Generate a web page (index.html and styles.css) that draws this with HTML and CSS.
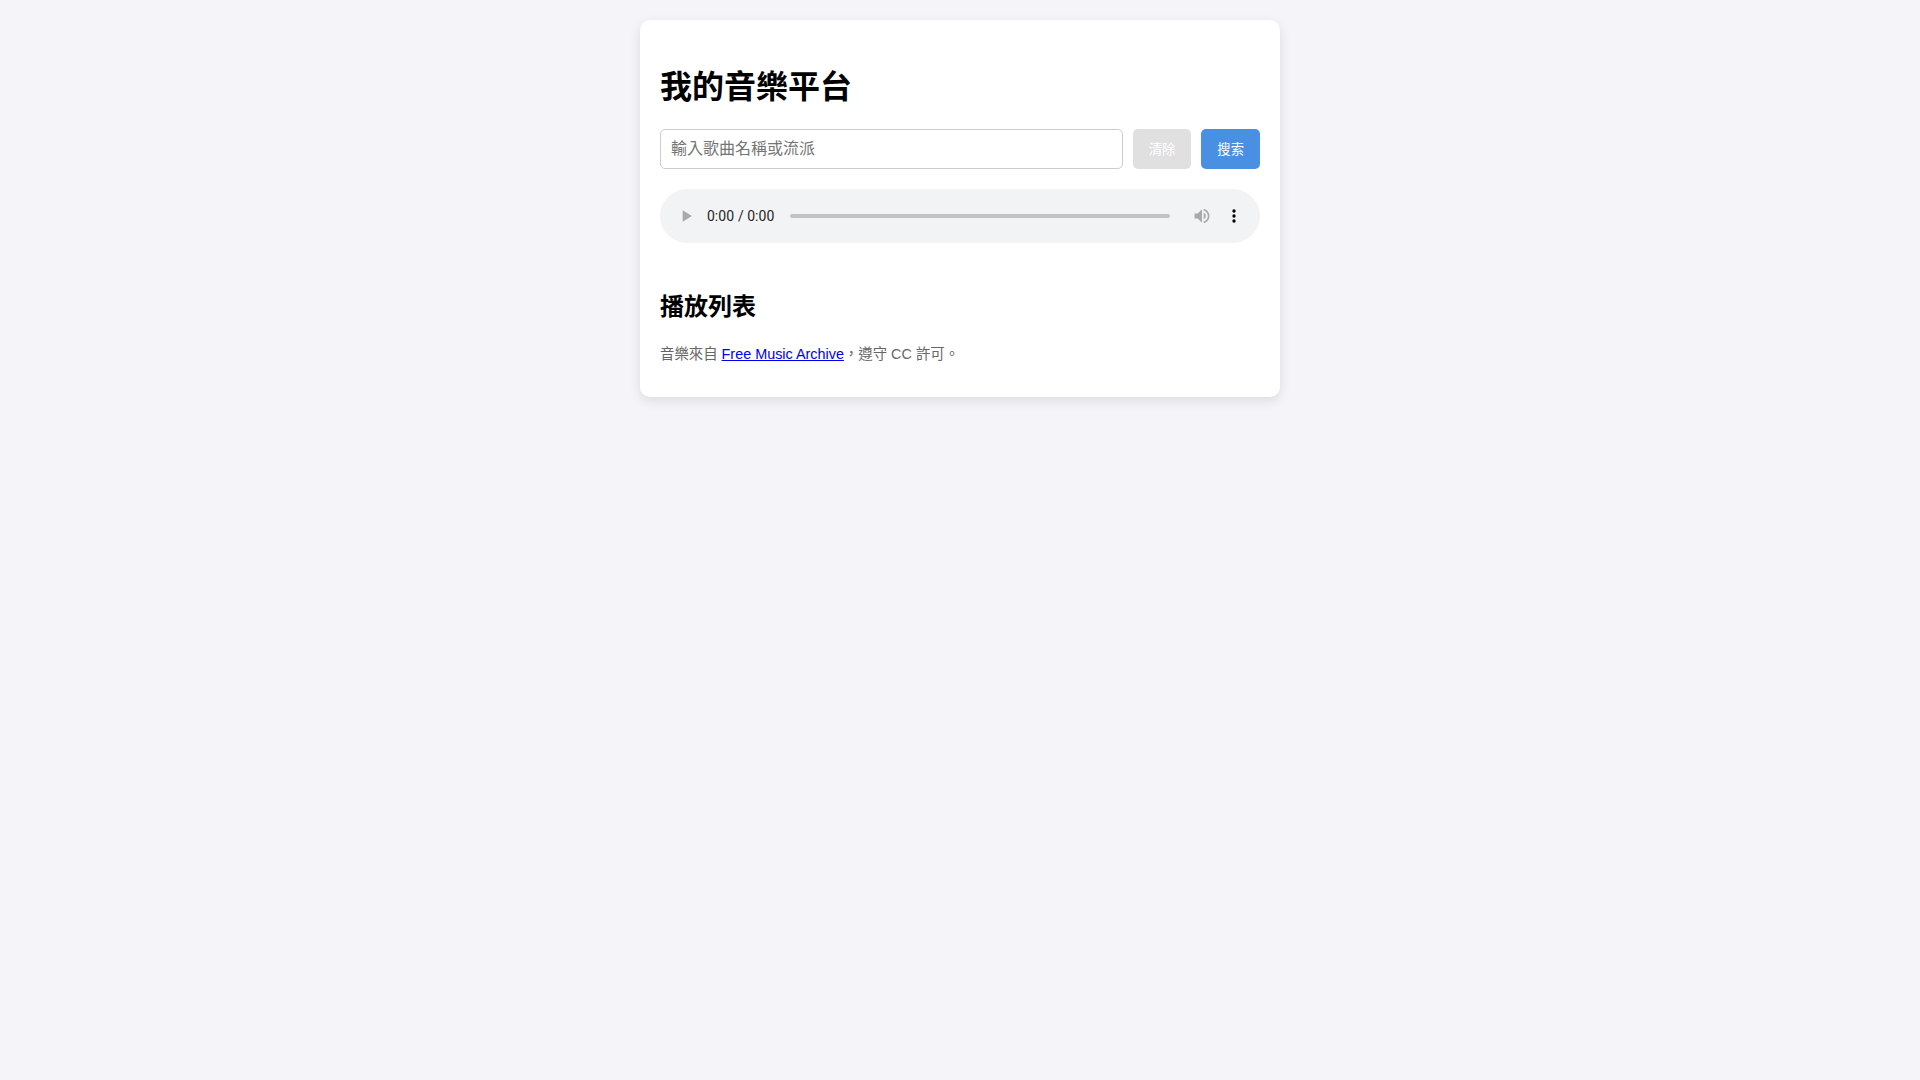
FILE: index.html
```html
<!DOCTYPE html>
<html lang="zh-TW">
  <head>
    <meta charset="UTF-8" />
    <meta name="viewport" content="width=device-width, initial-scale=1.0" />
    <title>我的音樂平台</title>
    <link rel="stylesheet" href="styles.css">
  </head>
  <body>
    <div class="container">
      <h1>我的音樂平台</h1>

      <!-- Search -->
      <div class="search-bar">
        <input type="text" id="searchInput" placeholder="輸入歌曲名稱或流派" />
        <button class="btn-clear" disabled>清除</button>
        <button class="btn-search">搜索</button>
      </div>

      <!-- Player -->
      <audio id="player" controls></audio>

      <!-- Playlist -->
      <h2>播放列表</h2>
      <ul id="playlist" class="playlist"></ul>

      <p class="credit">音樂來自 <a href="#">Free Music Archive</a>，遵守 CC 許可。</p>
    </div>
  </body>
</html>
```

FILE: styles.css
```css
body {
  font-family: "Liberation Sans", Arial, "Noto Sans CJK TC", sans-serif;
  margin: 0;
  padding: 20px;
  background: #f4f4f9;
}

.container {
  max-width: 600px;
  margin: 0 auto;
  padding: 20px;
  background: #fff;
  border-radius: 10px;
  box-shadow: 0 4px 12px rgba(0, 0, 0, 0.1);
}

.search-bar {
  display: flex;
  gap: 10px;
  margin-bottom: 20px;
}

input {
  flex: 1;
  padding: 10px;
  font-family: inherit;
  font-size: 16px;
  border: 1px solid #ccc;
  border-radius: 5px;
}

button {
  padding: 10px 16px;
  font-family: inherit;
  border: none;
  border-radius: 5px;
  background: #4a90e2;
  color: #fff;
  cursor: pointer;
}

button:disabled {
  background: #e0e0e0;
  cursor: not-allowed;
}

audio {
  width: 100%;
  margin-bottom: 20px;
}

.playlist {
  list-style: none;
  margin: 0;
  padding: 0;
}

.credit {
  font-size: 14.4px;
  color: #666;
}
```
